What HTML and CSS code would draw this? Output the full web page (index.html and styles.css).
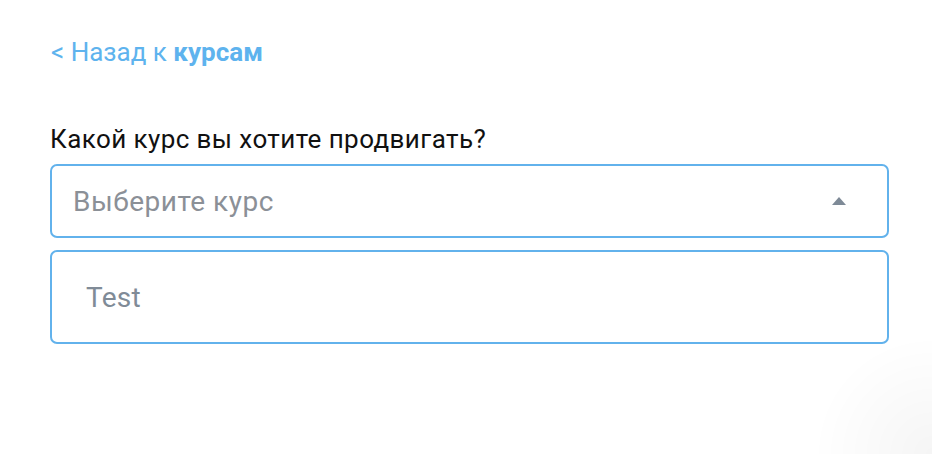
FILE: index.html
```html
<!DOCTYPE html>
<html lang="ru">
<head>
<meta charset="utf-8">
<link rel="stylesheet" href="styles.css">
</head>
<body>
<div class="page">
  <a class="back" href="#">&lt; Назад к <b>курсам</b></a>
  <div class="question">Какой курс вы хотите продвигать?</div>
  <div class="select">
    <span class="placeholder">Выберите курс</span>
    <span class="caret"></span>
  </div>
  <div class="option">Test</div>
</div>
<div class="corner"></div>
</body>
</html>
```
FILE: styles.css
```css
html, body {
  margin: 0;
  padding: 0;
  background: #ffffff;
  font-family: Roboto, "Liberation Sans", sans-serif;
}
.page {
  padding: 36px 43px 0 50px;
  display: flex;
  flex-direction: column;
}
.back {
  color: #5eb3ee;
  text-decoration: none;
  font-size: 26px;
  line-height: 32px;
  margin-left: 1px;
}
.back b {
  font-weight: 700;
}
.question {
  margin-top: 55px;
  font-size: 26px;
  letter-spacing: 0.42px;
  line-height: 32px;
  color: #111111;
}
.select {
  margin-top: 9px;
  height: 74px;
  box-sizing: border-box;
  border: 2px solid #62b2ec;
  border-radius: 7px;
  display: flex;
  align-items: center;
  justify-content: space-between;
  padding: 0 41px 0 21px;
}
.placeholder {
  font-size: 28px;
  letter-spacing: 0.5px;
  color: #8b9097;
}
.caret {
  width: 0;
  height: 0;
  border-left: 7px solid transparent;
  border-right: 7px solid transparent;
  border-bottom: 8px solid #7e8a97;
}
.option {
  margin-top: 12px;
  height: 94px;
  box-sizing: border-box;
  border: 2px solid #62b2ec;
  border-radius: 7px;
  display: flex;
  align-items: center;
  padding: 0 0 0 34px;
  font-size: 28px;
  letter-spacing: 0.3px;
  color: #808b97;
}
.corner {
  position: fixed;
  right: 0;
  bottom: 0;
  width: 120px;
  height: 120px;
  background: radial-gradient(circle at 100% 100%, rgba(0,0,0,0.04), rgba(0,0,0,0) 70%);
  pointer-events: none;
}
```
